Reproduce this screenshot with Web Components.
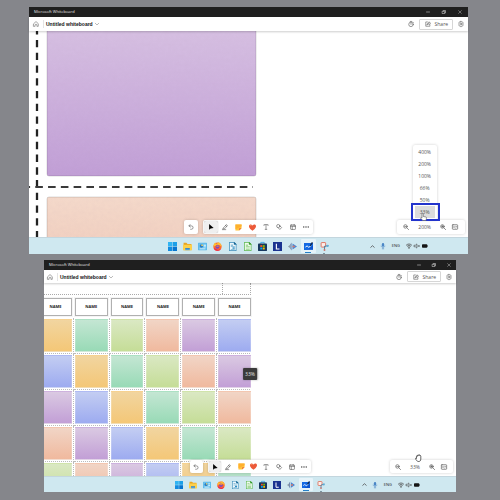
<!DOCTYPE html>
<html lang="en">
<head>
<meta charset="utf-8">
<title>Microsoft Whiteboard zoom</title>
<style>
  body {
    margin: 0; min-height: 100vh; box-sizing: border-box; padding: 7px 0 8px;
    display: flex; flex-direction: column; gap: 6px;
    background: #85868b; color: #444;
    font: 5px/8px "Open Sans", "Noto Sans", sans-serif;
  }
  app-window.large { flex: 247 1 0; margin: 0 32px 0 29px; --edge: 4px; --step: 16px; --header: 14px; --task: 17px; --icon: 6px; --pill: 14px; --task-icon: 9px; --tray-pad: 40px; }
  app-window.small { flex: 232 1 0; margin: 0 44px; --edge: 3px; --step: 15px; --header: 13px; --task: 16px; --icon: 6px; --pill: 13px; --task-icon: 8px; --tray-pad: 36px; }
</style>
</head>
<body>
<app-window class="large">
  <large-board></large-board>
  <tool-bar slot="tools"></tool-bar>
  <zoom-bar slot="zoom" level="200%"><zoom-menu></zoom-menu></zoom-bar>
</app-window>
<app-window class="small">
  <name-board></name-board>
  <zoom-tip>33%</zoom-tip>
  <tool-bar slot="tools"></tool-bar>
  <zoom-bar slot="zoom" level="33%"><hand-cursor></hand-cursor></zoom-bar>
</app-window>

<script>
const RESET = `*{box-sizing:border-box}
button{font:inherit;color:inherit;background:none;border:0;margin:0;padding:0;display:flex;align-items:center;justify-content:center;white-space:nowrap}`;

const define = (name, render) => customElements.define(name, class extends HTMLElement {
  connectedCallback() {
    if (this.shadowRoot) return;
    const t = document.createElement('template');
    t.innerHTML = render(this);
    this.attachShadow({ mode: 'open' }).append(t.content.cloneNode(true));
  }
});

/* Line icons take currentColor; product icons carry their own colours. 16x16 grid. */
const line = (d, w = 1.5) => `<g fill="none" stroke="currentColor" stroke-width="${w}" stroke-linecap="round" stroke-linejoin="round">${d}</g>`;
const ICONS = {
  home: line('<path d="M2 7 8 1.5 14 7v7.2h-3.6V11a2.4 2.4 0 0 0-4.8 0v3.2H2z"/>', 1.4),
  chevron: line('<path d="m1 5 7 7 7-7"/>', 2),
  up: line('<path d="m2.500 10.500 5.500-5 5.500 5"/>', 2.4),
  minus: line('<path d="M2 8h12"/>', 2),
  restore: line('<path d="M2 5h9v9H2zM5 5V2h9v9h-3"/>', 2),
  close: line('<path d="m2.500 2.500 11 11m0-11-11 11"/>', 1.6),
  timer: line('<circle cx="8" cy="9" r="6"/><path d="M6 1.200h4M8 5.500V9M13 3l1.200 1.200"/>', 1.6),
  share: line('<path d="M6.500 2.500H2v11.500h11V10M5.500 10c.3-3.500 2.500-5 5-5V2.200L15 6l-4.500 3.500V7.300c-2 0-3.500.7-5 2.700z"/>', 1.5),
  gear: line('<path d="M6.500 1h3l.6 2 2-.5 2 2.900L12.700 8l1.400 2.600-2 2.900-2-.5-.6 2h-3l-.6-2-2 .5-2-2.900L3.300 8 1.900 5.400l2-2.900 2 .5z"/><circle cx="8" cy="8" r="2.300"/>', 1.4),
  undo: line('<path d="M5.500 1.500 2.500 5l3.500 3M2.800 5H9a4.500 4.500 0 0 1 0 9H7"/>', 1.6),
  select: '<path d="M3 0v15.500l4-3.800 8-.8z" fill="#000"/>',
  pen: line('<path d="M4 10 11.500 1.700l3 2.500L7 12.500 3.200 13zM1 15h9M9.500 4l3 2.600"/>', 1.6),
  note: '<path d="M1 1h14v8.500L9.500 15H1z" fill="#ffc43d"/><path d="M1 1h14v4L1 12z" fill="#ffb02e"/><path d="M15 9.500 9.500 15v-5.500z" fill="#f06a35"/>',
  heart: '<path d="M8 15.500C-1 9 0 5 0 4.500 0 1 5-.5 8 3.200 11-.5 16 1 16 4.500c0 .5 1 4.500-8 11z" fill="#ec5a3a"/><path d="M1.500 4.500C2 2 5 1.500 7 4.500z" fill="#f48a5a"/>',
  text: line('<path d="M2.500 4V1.700h11V4M8 1.700v12.600M5.800 14.300h4.400"/>', 1.5),
  shapes: line('<circle cx="6" cy="5.500" r="4.300"/><path d="m10.500 5 4.500 4.500-4.800 5L5.700 10"/>', 1.6),
  template: line('<rect x="1.500" y="2.500" width="13" height="12" rx="1.500"/><path d="M1.500 6h13M6 6v8.500M11 1v5"/>', 1.6),
  more: '<g fill="#444"><circle cx="2" cy="8" r="1.900"/><circle cx="8" cy="8" r="1.900"/><circle cx="14" cy="8" r="1.900"/></g>',
  zoomout: line('<circle cx="6.500" cy="6.500" r="4.700"/><path d="m10 10 5 5M4.500 6.500h4"/>', 1.7),
  zoomin: line('<circle cx="6.500" cy="6.500" r="4.700"/><path d="m10 10 5 5M4.500 6.500h4M6.500 4.500v4"/>', 1.8),
  fit: line('<rect x="1" y="2" width="14" height="12" rx="1.500"/><path d="M6 6 4 8l2 2m4-4 2 2-2 2"/>', 1.8),
  windows: '<path d="M0 0h7.600v7.600H0z" fill="#31b4f2"/><path d="M8.400 0H16v7.600H8.400z" fill="#1c9fe8"/><path d="M0 8.400h7.600V16H0z" fill="#128be0"/><path d="M8.400 8.400H16V16H8.400z" fill="#0574d0"/>',
  folder: '<path d="M1 1.500h5l2 2h7v11H1z" fill="#e9a520"/><path d="M0 5h16v9.500H0z" fill="#fcd04b"/><path d="M4 11h8v3.500H4z" fill="#4aa0df"/><path d="M4 11h8v1H4z" fill="#2872b8"/>',
  panel: '<rect y="1.500" width="16" height="13" rx="1" fill="#55b3e8"/><rect x="1" y="2.500" width="14" height="11" fill="#6fc5ee"/><circle cx="6" cy="7" r="3" fill="#2a7bc3"/><path d="M6 4a3 3 0 0 1 3 3H6z" fill="#ffd55a"/><path d="M10.500 5H14v1.500h-3.500zm0 3H14v1.500h-3.500zM3 11.500h10V13H3z" fill="#e6f7ff"/>',
  firefox: '<circle cx="8" cy="8.500" r="7.400" fill="#ff6a2b"/><path d="M.8 8C1 4 3 2 4 1l1.500 3L10 .5c3 1.500 5.500 5 5.200 8l-4-3z" fill="#ffbd32"/><path d="M1 10a7.300 7.300 0 0 0 13.500 2L9 14z" fill="#e8255f"/><circle cx="8" cy="8.500" r="3.500" fill="#7d46c8"/><path d="M4.500 7 9 6l2 1.500-3 1z" fill="#ff912d"/>',
  writer: '<path d="M2 0h9l4 4v12H2z" fill="#3589b8"/><path d="M3.200 1.200h7L10.500 5h3.300v9.800H3.200z" fill="#eef8fc"/><path d="M11 0l4 4h-4z" fill="#175f8b"/><path d="M5 5h4v1H5zm0 2.500h7v1H5zm0 5h7v1H5z" fill="#3589b8"/><path d="M8 9.500h4v2.500H8z" fill="#2f8fc4"/>',
  calc: '<path d="M2 0h9l4 4v12H2z" fill="#58b64c"/><path d="M3.200 1.200h7L10.500 5h3.300v9.800H3.200z" fill="#f0fbed"/><path d="M11 0l4 4h-4z" fill="#319227"/><path d="M5 5h4v1H5zm0 2.500h7v1H5zm0 2.500h7v1H5zm0 2.500h7v1H5z" fill="#5fbb53"/>',
  store: '<path d="M5 3V.7h6V3" fill="none" stroke="#2a9be0" stroke-width="1.400"/><rect x="0" y="2.500" width="16" height="13.500" rx="1.500" fill="#17385f"/><path d="M4 5.500h3.600V9H4z" fill="#f25022"/><path d="M8.400 5.500H12V9H8.400z" fill="#7fba00"/><path d="M4 9.800h3.600v3.500H4z" fill="#00a4ef"/><path d="M8.400 9.800H12v3.500H8.400z" fill="#ffb900"/>',
  lapp: '<rect width="16" height="16" fill="#1a3390"/><path d="M6 3v9.500h5.500" fill="none" stroke="#fff" stroke-width="2"/>',
  move: '<path d="M6.500 1v14L4 12V4z" fill="#7790b5"/><path d="M0 8l4-3v6z" fill="#8e9cab"/><path d="M8 2.500 16 8l-8 5.500z" fill="#4486d6"/><path d="M8 6.500h4v3H8z" fill="#d9796b"/>',
  board: '<path d="M0 2h16v12H0z" fill="#0d55cf"/><path d="M0 2h16v4L5 14H0z" fill="#1369e4"/><path d="m2.500 9 3-2 3 2.500L13 6" fill="none" stroke="#fff" stroke-width="1.700"/><path d="m10 6 4-6 2 1.500-4 6z" fill="#12294e"/>',
  snip: '<rect x="2" y="1" width="8" height="8" rx="1" fill="#fdeeea" stroke="#db6b56" stroke-width="1.600"/><path d="M8 15V8l7-2" fill="none" stroke="#5a87a5" stroke-width="1.800"/><circle cx="13.500" cy="7" r="2" fill="#59aeda"/><circle cx="8" cy="14" r="1.700" fill="#d76d5c"/>',
  mic: '<rect x="5" y="0" width="6" height="10" rx="3" fill="#4a86c6"/><path d="M3 7c0 6.500 10 6.500 10 0M8 12v3.500M5 15.500h6" fill="none" stroke="#4a86c6" stroke-width="1.400"/>',
  wifi: line('<path d="M1 5.500c4-4 10-4 14 0M3.500 8.500c2.500-2.500 6.500-2.500 9 0M6 11.500c1.200-1.200 2.800-1.200 4 0"/>', 2) + '<circle cx="8" cy="13.500" r="1.500" fill="#333"/>',
  mute: line('<path d="M1 6h2.500L7.500 2.500v11L3.500 10H1zM10.500 6l4 4m0-4-4 4"/>', 1.600),
  battery: '<rect y="3.500" width="14" height="9" rx="2" fill="#151515"/><path d="M14.500 6H16v4h-1.500z" fill="#222"/>'
};
define('wb-icon', el => `<style>:host{display:block;flex:none;width:var(--size,var(--icon));height:var(--size,var(--icon))}svg{display:block;width:100%;height:100%;overflow:visible}</style>
<svg viewBox="0 0 16 16" aria-hidden="true">${ICONS[el.getAttribute('name')]}</svg>`);

define('task-bar', () => {
  const apps = [['windows','Start'],['folder','File Explorer'],['panel','Control Panel'],['firefox','Firefox'],['writer','Writer'],['calc','Calc'],['store','Store'],['lapp','L'],['move','Mover'],['board','Whiteboard'],['snip','Snipping Tool']];
  return `<style>${RESET}
:host{display:grid;grid-template-columns:1fr 38% 1fr;height:var(--task);background:#cfe8f0;border-top:1px solid #c3d6de}
nav{grid-column:2;display:flex}
nav button{flex:1;position:relative;--size:var(--task-icon)}
.board{background:#e6f3f9;border-radius:1px;margin:1px 1px}
.board::after,.snip::after{content:"";position:absolute;bottom:0;left:50%;width:6px;height:1px;margin-left:-3px;background:#2580c8}
.snip::after{width:2px;margin-left:-1px;background:#7d949f}
.tray{display:flex;justify-content:flex-end;align-items:center;gap:2px;padding-right:var(--tray-pad);--size:var(--icon)}
.lang{font-size:4px;padding:0 4px;color:#222}
.chev{--size:5px;padding-right:3px}
</style><nav aria-label="Taskbar">${apps.map(a => `<button class="${a[0]}" aria-label="${a[1]}"><wb-icon name="${a[0]}"></wb-icon></button>`).join('')}</nav>
<div class="tray"><button class="chev" aria-label="Hidden icons"><wb-icon name="up"></wb-icon></button><button aria-label="Microphone"><wb-icon name="mic"></wb-icon></button><button class="lang">ENG</button><wb-icon name="wifi"></wb-icon><wb-icon name="mute"></wb-icon><wb-icon name="battery"></wb-icon></div>`;
});

define('app-window', () => `<style>${RESET}
:host{display:flex;flex-direction:column;min-width:0;background:#fff}
.caption{display:flex;align-items:center;height:10px;background:#1f1f1f;color:#e4e4e4;font-size:4px;padding-left:5px;--size:4px}
.caption span{flex:1}
.caption button{width:var(--step)}
header{display:flex;align-items:center;height:var(--header);background:#fff;box-shadow:0 1px 2px #0003;z-index:1;padding:0 4px 0 var(--edge);color:#555}
header h1{font:700 5px/8px "Liberation Sans",sans-serif;color:#111;margin:0 0 0 4px;padding:0 2px;border-left:1px solid #e4e4e4;white-space:nowrap}
.chev{--size:4px;color:#777}
.gap{flex:1}
.share{height:11px;border:1px solid #d6d6d6;border-radius:1px;margin:0 5px 0 5px;padding:0 4px 0 5px;gap:4px;--size:6px}
main{flex:1;position:relative;overflow:hidden;min-height:190px}
.tools{position:absolute;left:0;right:0;bottom:3px}
.zoom{position:absolute;right:3px;bottom:3px;width:15.400%}
</style>
<div class="caption"><span>Microsoft Whiteboard</span><button aria-label="Minimize"><wb-icon name="minus"></wb-icon></button><button aria-label="Restore"><wb-icon name="restore"></wb-icon></button><button aria-label="Close"><wb-icon name="close"></wb-icon></button></div>
<header><button aria-label="Home"><wb-icon name="home"></wb-icon></button><h1>Untitled whiteboard</h1><button class="chev" aria-label="Board options"><wb-icon name="chevron"></wb-icon></button><span class="gap"></span><button aria-label="Timer"><wb-icon name="timer"></wb-icon></button><button class="share"><wb-icon name="share"></wb-icon>Share</button><button aria-label="Settings"><wb-icon name="gear"></wb-icon></button></header>
<main><slot></slot><div class="tools"><slot name="tools"></slot></div><div class="zoom"><slot name="zoom"></slot></div></main>
<task-bar></task-bar>`);

define('tool-bar', () => {
  const tools = ['select','pen','note','heart','text','shapes','template','more'];
  return `<style>${RESET}
:host{display:flex;justify-content:center;gap:5px;color:#555}
.pill{display:flex;height:var(--pill);background:#fff;border-radius:2px;box-shadow:0 0 3px #0003}
.undo{width:var(--pill)}.set{width:25%}
button{flex:1 1 0;min-width:0}
.select{background:#efefef;box-shadow:0 0 1px #999;border-radius:2px;margin:1px}
.note,.heart{--size:7px}
</style><div class="pill undo"><button aria-label="Undo"><wb-icon name="undo"></wb-icon></button></div>
<div class="pill set" role="toolbar">${tools.map(t => `<button class="${t}" aria-label="${t}"><wb-icon name="${t}"></wb-icon></button>`).join('')}</div>`;
});

define('zoom-bar', el => `<style>${RESET}
:host{display:grid;grid-template-columns:17fr 20fr 16fr 9fr;padding-right:5px;height:var(--pill);background:#fff;border-radius:2px;box-shadow:0 0 3px #0003;color:#555;--size:6px}
.level{position:relative;display:flex;justify-content:center}
.over{position:absolute;left:0;right:0;bottom:100%;display:flex;justify-content:center}
</style><button aria-label="Zoom out"><wb-icon name="zoomout"></wb-icon></button>
<div class="level"><button>${el.getAttribute('level')}</button><div class="over"><slot></slot></div></div>
<button aria-label="Zoom in"><wb-icon name="zoomin"></wb-icon></button><button aria-label="Fit to screen"><wb-icon name="fit"></wb-icon></button>`);

define('zoom-menu', () => `<style>${RESET}
:host{display:block;position:relative;width:20px;flex:none;padding:1px 2px 2px;background:#fff;border-radius:2px;box-shadow:0 0 3px #0003}
button{width:100%;height:12px}
.on{background:#dcdcdc}
.mark{position:absolute;left:-2px;right:-3px;bottom:-1px;height:18px;border:2px solid #2334cc}
svg{position:absolute;left:7px;bottom:-1px;width:7px;height:8px}
</style>${['400%','200%','100%','66%','50%'].map(v => `<button>${v}</button>`).join('')}<button class="on">33%</button>
<div class="mark"></div><svg viewBox="0 0 14 16" aria-hidden="true"><path d="M4 9V2a1.300 1.300 0 0 1 2.600 0v5l5 1c1.400.3 1.500 1 1.300 2.500L12 15H5.500L1 10c1-1.200 2-1 3-.2z" fill="#fff" stroke="#555" stroke-width="1.200"/></svg>`);

define('hand-cursor', () => `<style>:host{display:block;margin:0 0 -2px 6px}svg{display:block;width:7px;height:8px}</style>
<svg viewBox="0 0 14 16" aria-hidden="true"><path d="M3 9V4.500c0-1.500 2-1.500 2 0V3c0-1.500 2.200-1.500 2.200 0v-.6c0-1.500 2.200-1.500 2.200.5v1c.3-1.300 2.200-1 2.200.6V10c0 3-1.500 5-4 5H6C4 14.500 2 11.500 1 9.500c-.5-1.300 1-1.700 2-.5z" fill="#fff" stroke="#333" stroke-width="1.500"/></svg>`);

define('zoom-tip', () => `<style>:host{position:absolute;left:50%;top:47%;transform:translate(-50%,-50%);padding:2px;background:#3a3a3a;color:#e4e4e4;border-radius:1px;box-shadow:0 0 2px #0005;line-height:8px}</style><slot></slot>`);

/* Close-up of the template: two sticky notes and the cut lines between them. */
define('large-board', () => `<style>:host{position:absolute;inset:0}svg{display:block;width:100%;height:100%}</style>
<svg aria-hidden="true"><defs>
<linearGradient id="v" x2="0" y2="1"><stop stop-color="#d7c1e2"/><stop offset="1" stop-color="#c19fd6"/></linearGradient>
<linearGradient id="p" x2="0" y2="1"><stop stop-color="#f4d9ca"/><stop offset="1" stop-color="#f0cdbd"/></linearGradient>
<filter id="paper" x="0" y="0" width="1" height="1"><feTurbulence type="fractalNoise" baseFrequency=".25" numOctaves="2"/><feColorMatrix values="0 0 0 0 .4  0 0 0 0 .25  0 0 0 0 .4  .35 0 0 0 -.1"/><feComposite in2="SourceAlpha" operator="in"/></filter></defs>
<g stroke="#0002" stroke-width="1"><rect x="18" y="-10" width="209" height="155" rx="2" fill="url(#v)"/><rect x="18" y="166" width="209" height="60" rx="2" fill="url(#p)"/></g>
<g filter="url(#paper)" opacity=".2"><rect x="18" y="-10" width="209" height="155"/><rect x="18" y="166" width="209" height="60"/></g>
<path d="M8 -3.700V206" stroke="#222" stroke-width="2.300" stroke-dasharray="7.300 5.430"/>
<path d="M-6.500 156H224" stroke="#3a3a3a" stroke-width="2" stroke-dasharray="7.600 5.180"/></svg>`);

/* Whole template: a header strip, name cards and a grid of sticky notes. */
define('name-board', () => {
  const rows = ['yglovb', 'byglov', 'vbyglo', 'ovbygl', 'lovbyg'];
  return `<style>
:host{position:absolute;left:-5px;top:0;width:212px;font-size:4px;line-height:6px;color:#222}
.strip{display:grid;grid-template-columns:1fr 28px;height:12px;border:1px dotted #aaa;border-top:0;box-sizing:border-box}
.strip i:last-child{border-left:1px dotted #aaa}
.names,.notes{display:grid;grid-template-columns:repeat(6,1fr);gap:3px}
.names{padding:3px 0}
.names b{height:18px;box-sizing:border-box;border:1px solid #b0b0b0;outline:1px solid #0000000a;display:flex;align-items:center;justify-content:center}
.notes i{position:relative;height:33px;box-sizing:border-box;border:1px solid #ffffff30}
.notes i::after{content:"";position:absolute;inset:-2px -3px -3px -2px;border:dotted #bbb;border-width:0 1px 1px 0}
.notes i:nth-child(6n)::after{border-right:0;right:0}
.y{background:linear-gradient(#f1d5a0,#f4c777)}.g{background:linear-gradient(#c4e6d3,#98dab6)}
.l{background:linear-gradient(#dae8c3,#c5dd97)}.o{background:linear-gradient(#f1d5c6,#f0b99e)}
.v{background:linear-gradient(#dac9e2,#c29fd6)}.b{background:linear-gradient(#c3cdf2,#9dabf0)}
</style><div class="strip"><i></i><i></i></div><div class="names">${'<b>NAME</b>'.repeat(6)}</div>
<div class="notes">${rows.join('').split('').map(c => `<i class="${c}"></i>`).join('')}</div>`;
});
</script>
</body>
</html>
